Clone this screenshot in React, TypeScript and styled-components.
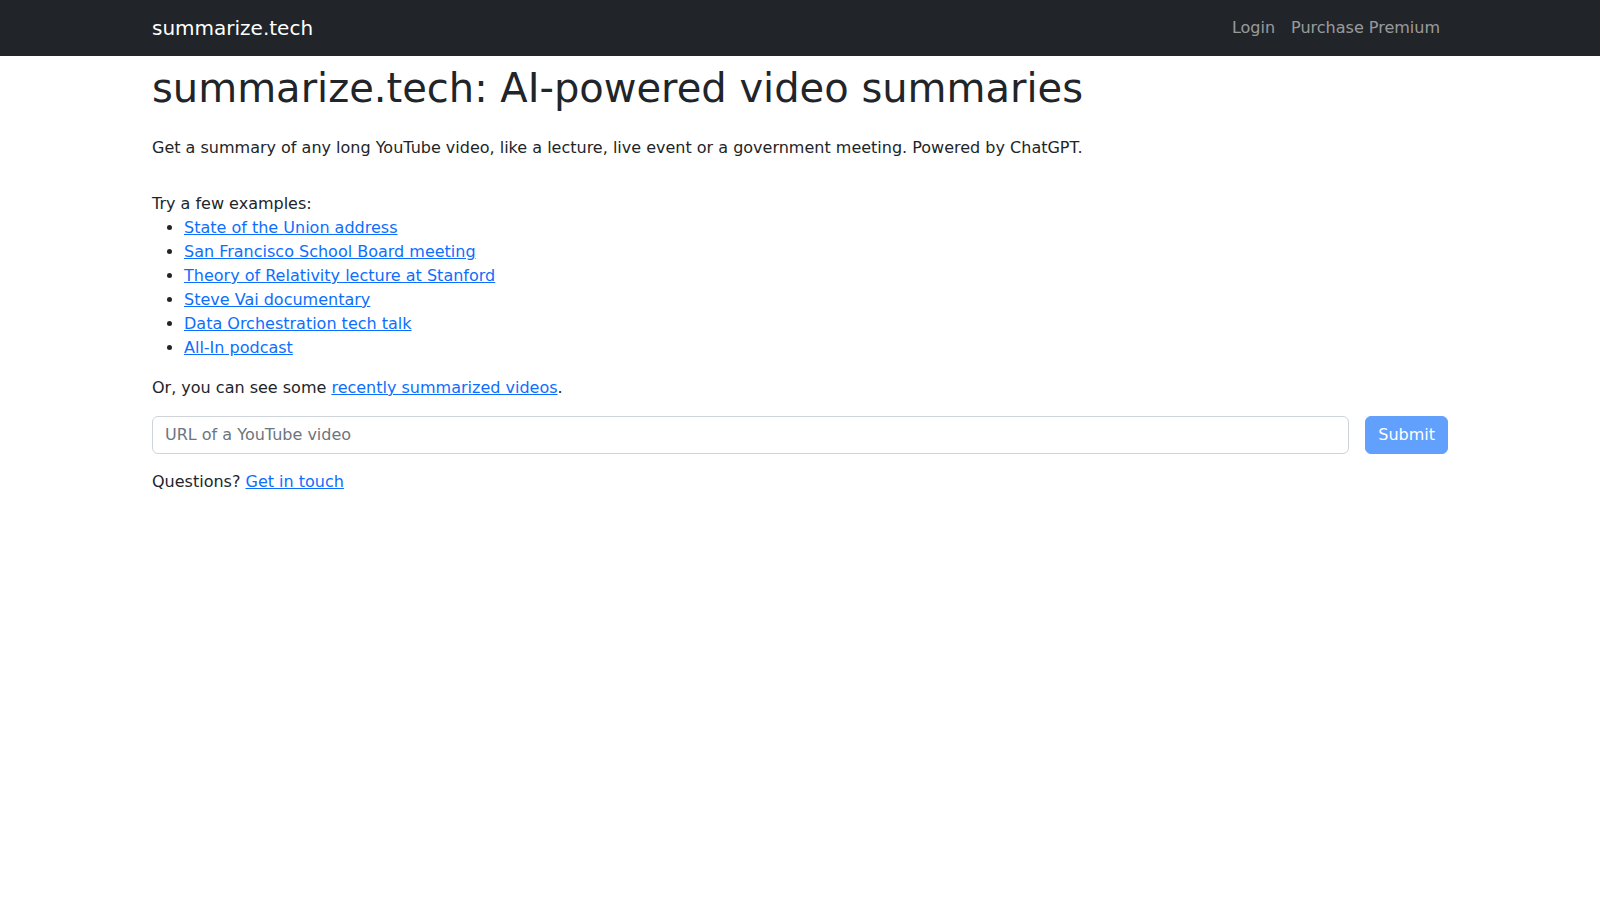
import styled, { createGlobalStyle } from 'styled-components'

const GlobalStyle = createGlobalStyle`
  *, *::before, *::after {
    box-sizing: border-box;
  }
  body {
    margin: 0;
    font-family: "DejaVu Sans", "Liberation Sans", sans-serif;
    font-size: 16px;
    line-height: 1.5;
    color: #212529;
    background: #fff;
  }
`

const examples = [
  'State of the Union address',
  'San Francisco School Board meeting',
  'Theory of Relativity lecture at Stanford',
  'Steve Vai documentary',
  'Data Orchestration tech talk',
  'All-In podcast',
]

const App = () => {
  return (
    <>
      <GlobalStyle />
      <Navbar>
        <NavContainer>
          <Brand href="#">summarize.tech</Brand>
          <NavLinks>
            <NavLink href="#">Login</NavLink>
            <NavLink href="#">Purchase Premium</NavLink>
          </NavLinks>
        </NavContainer>
      </Navbar>

      <Main>
        <Title>summarize.tech: AI-powered video summaries</Title>
        <Lead>
          Get a summary of any long YouTube video, like a lecture, live event or a government
          meeting. Powered by ChatGPT.
        </Lead>

        <ExamplesIntro>Try a few examples:</ExamplesIntro>
        <ExampleList>
          {examples.map((name) => (
            <li key={name}>
              <Link href="#">{name}</Link>
            </li>
          ))}
        </ExampleList>

        <Text>
          Or, you can see some <Link href="#">recently summarized videos</Link>.
        </Text>

        <Form onSubmit={(e) => e.preventDefault()}>
          <UrlInput type="text" placeholder="URL of a YouTube video" />
          <SubmitButton type="submit" disabled>
            Submit
          </SubmitButton>
        </Form>

        <Text>
          Questions? <Link href="#">Get in touch</Link>
        </Text>
      </Main>
    </>
  )
}

const Navbar = styled.nav`
  background: #212529;
  padding: 8px 0;
`

const Container = styled.div`
  max-width: 1320px;
  margin: 0 auto;
  padding: 0 12px;
`

const NavContainer = styled(Container)`
  display: flex;
  align-items: center;
  justify-content: space-between;
`

const Brand = styled.a`
  color: #fff;
  font-size: 20px;
  line-height: 30px;
  padding: 5px 0;
  text-decoration: none;
`

const NavLinks = styled.div`
  display: flex;
`

const NavLink = styled.a`
  color: rgba(255, 255, 255, 0.55);
  padding: 8px;
  text-decoration: none;
`

const Main = styled(Container)`
  padding-top: 8px;
`

const Title = styled.h1`
  font-size: 40px;
  font-weight: 500;
  line-height: 1.2;
  margin: 0 0 8px;
`

const Text = styled.p`
  margin: 0 0 16px;
`

const Lead = styled(Text)`
  margin-top: 24px;
  margin-bottom: 32px;
`

const ExamplesIntro = styled.div``

const ExampleList = styled.ul`
  margin: 0 0 16px;
  padding-left: 32px;
`

const Link = styled.a`
  color: #0d6efd;
  text-decoration: underline;
`

const Form = styled.form`
  display: flex;
  gap: 16px;
  margin-bottom: 16px;
`

const UrlInput = styled.input`
  flex: 1;
  font: inherit;
  color: #212529;
  padding: 6px 12px;
  line-height: 1.5;
  border: 1px solid #ced4da;
  border-radius: 6px;
  outline: none;

  &::placeholder {
    color: #6c757d;
  }
`

const SubmitButton = styled.button`
  font: inherit;
  line-height: 1.5;
  padding: 6px 12px;
  color: #fff;
  background: #0d6efd;
  border: 1px solid #0d6efd;
  border-radius: 6px;
  cursor: pointer;

  &:disabled {
    opacity: 0.65;
    cursor: default;
  }
`

export default App
